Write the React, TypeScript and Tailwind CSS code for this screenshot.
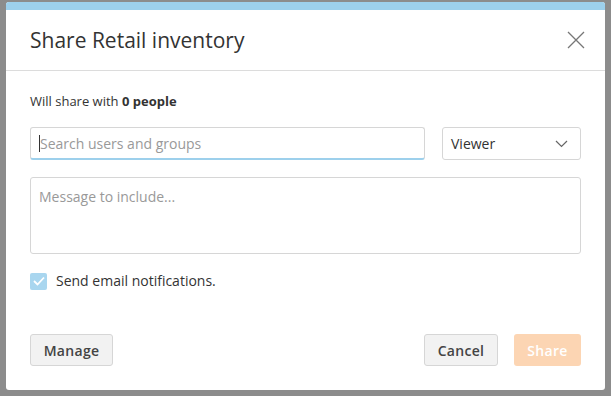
import React from "react";

const App = () => {
  return (
    <div className="h-[396px] w-[611px] overflow-hidden bg-[#8c8c8c] pt-[2px] pl-[6px] font-['Open_Sans',sans-serif] text-[#333]">
      <div className="flex h-[388px] w-[599px] flex-col overflow-hidden rounded-[3px] bg-white">
        <div className="h-[8px] bg-[#9dd0ec]" />
        <div className="flex h-[61px] items-center justify-between border-b border-[#dcdcdc] pl-[24px] pr-[20px]">
          <h2 className="text-[21px] leading-none">Share Retail inventory</h2>
          <svg width="18" height="18" viewBox="0 0 18 18" className="text-[#777]">
            <path d="M1 1 L17 17 M17 1 L1 17" stroke="currentColor" strokeWidth="1.3" fill="none" />
          </svg>
        </div>
        <div className="flex flex-1 flex-col px-[24px] pt-[21px]">
          <p className="text-[13px] leading-[18px]">
            Will share with <span className="font-bold">0 people</span>
          </p>
          <div className="mt-[17px] flex gap-[17px]">
            <div className="flex h-[33px] w-[395px] items-center rounded-[3px] border border-[#d6d6d6] border-b-2 border-b-[#9dd0ec] px-[8px]">
              <span className="h-[17px] w-px bg-[#333]" />
              <span className="text-[14px] text-[#999]">Search users and groups</span>
            </div>
            <div className="flex h-[33px] w-[139px] items-center justify-between rounded-[3px] border border-[#d6d6d6] pl-[8px] pr-[12px]">
              <span className="text-[14px]">Viewer</span>
              <svg width="13" height="8" viewBox="0 0 13 8">
                <path d="M1 1 L6.5 6.5 L12 1" stroke="#666" strokeWidth="1.2" fill="none" />
              </svg>
            </div>
          </div>
          <div className="mt-[17px] h-[77px] rounded-[3px] border border-[#d6d6d6] px-[8px] pt-[8px] text-[14px] text-[#999]">
            Message to include...
          </div>
          <div className="mt-[17px] flex h-[20px] items-center gap-[9px]">
            <div className="flex h-[17px] w-[17px] items-center justify-center rounded-[2px] bg-[#a9d6ef]">
              <svg width="12" height="10" viewBox="0 0 12 10">
                <path d="M1 5 L4.5 8.5 L11 1.5" stroke="white" strokeWidth="1.8" fill="none" />
              </svg>
            </div>
            <span className="text-[14px] leading-[20px]">Send email notifications.</span>
          </div>
          <div className="mt-[43px] flex items-center">
            <button className="h-[32px] w-[83px] rounded-[3px] border border-[#d6d6d6] bg-[#f2f2f2] text-[14px] font-semibold tracking-[0.3px] text-[#444]">
              Manage
            </button>
            <div className="flex-1" />
            <button className="h-[32px] w-[74px] rounded-[3px] border border-[#d6d6d6] bg-[#f2f2f2] text-[14px] font-semibold tracking-[0.3px] text-[#444]">
              Cancel
            </button>
            <button className="ml-[16px] h-[32px] w-[67px] rounded-[3px] bg-[#fcd5b3] text-[14px] font-semibold tracking-[0.3px] text-white">
              Share
            </button>
          </div>
        </div>
      </div>
    </div>
  );
};

export default App;
